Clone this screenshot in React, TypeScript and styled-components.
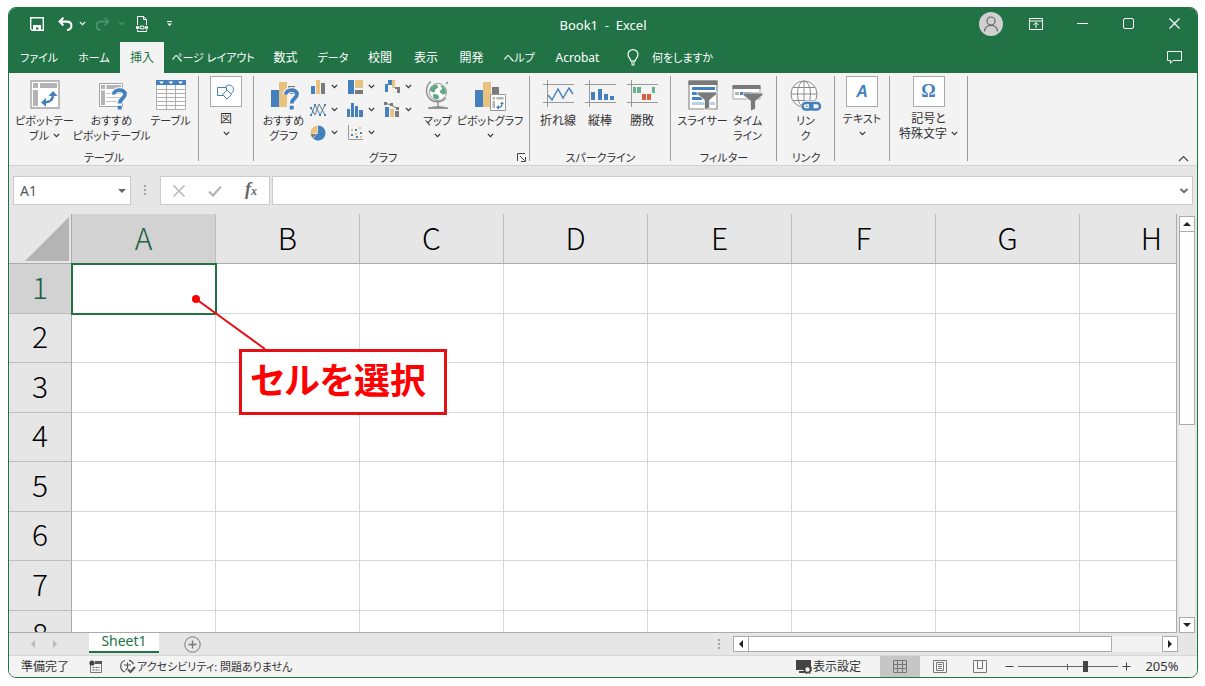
import React from "react";
import styled, { createGlobalStyle, css } from "styled-components";

const green = "#217346";
const blue = "#4480bd";
const sand = "#e9c27f";
const grey = "#7a7a7a";
const chrome = "#e6e6e6";
const panel = "#f3f3f3";

const Global = createGlobalStyle`
  * { box-sizing: border-box; }
  body {
    margin: 0;
    background: #fff;
    font-family: "Noto Sans", "Noto Sans CJK JP", sans-serif;
    font-size: 12px;
    line-height: 15px;
    color: #333;
    font-feature-settings: "palt";
  }
  button, input {
    font: inherit;
    font-feature-settings: inherit;
    color: inherit;
    border: 0;
    padding: 0;
    margin: 0;
    background: none;
  }
  svg { display: block; flex: none; }
`;

const Page = styled.div`
  padding: 7px 7px 8px 8px;
`;

const Window = styled.div`
  display: flex;
  flex-direction: column;
  height: calc(100vh - 15px);
  min-height: 400px;
  border: 1px solid ${green};
  border-radius: 8px;
  overflow: hidden;
  background: ${chrome};
`;

/* ---------- title bar ---------- */

const TitleBar = styled.header`
  display: grid;
  grid-template-columns: 1fr auto 1fr;
  height: 34px;
  flex: none;
  background: ${green};
  color: #fff;
`;

const QuickAccess = styled.div`
  display: flex;
  align-items: center;
  padding: 0 0 3px 12px;
`;

const QuickButton = styled.button<{ $w: number; $dim?: boolean }>`
  display: flex;
  align-items: center;
  justify-content: center;
  width: ${(p) => p.$w}px;
  height: 30px;
  color: ${(p) => (p.$dim ? "#4f9370" : "#fff")};
`;

const Title = styled.div`
  padding-top: 1px;
  font-size: 13px;
  line-height: 32px;
  white-space: pre;
`;

const WindowControls = styled.div`
  display: flex;
  justify-content: flex-end;
  align-items: center;
  padding-bottom: 3px;
`;

const Avatar = styled.button`
  width: 24px;
  height: 24px;
  margin-right: 10px;
  border-radius: 50%;
  background: #d0d0d0;
  color: #666;
`;

const ControlButton = styled.button`
  display: flex;
  align-items: center;
  justify-content: center;
  width: 46px;
  height: 30px;
`;

/* ---------- ribbon tabs ---------- */

const TabRow = styled.nav`
  display: flex;
  height: 31px;
  flex: none;
  padding-left: 1px;
  background: ${green};
  color: #fff;
`;

const RibbonTab = styled.button<{ $w: number; $active?: boolean; $kana?: boolean }>`
  width: ${(p) => p.$w}px;
  font-size: ${(p) => (p.$kana ? 11 : 12)}px;
  white-space: nowrap;
  display: flex;
  align-items: center;
  justify-content: center;
  ${(p) =>
    p.$active &&
    css`
      background: ${panel};
      color: ${green};
    `}
`;

const TellMe = styled.button`
  display: flex;
  align-items: center;
  gap: 13px;
  margin-left: 16px;
  font-size: 11px;
`;

const CommentButton = styled.button`
  margin-left: auto;
  padding-right: 14px;
`;

/* ---------- ribbon ---------- */

const Ribbon = styled.section`
  display: flex;
  height: 93px;
  flex: none;
  background: ${panel};
  border-bottom: 1px solid #d2d2d2;
`;

const Group = styled.div<{ $w: number }>`
  display: flex;
  flex-direction: column;
  flex: none;
  position: relative;
  width: ${(p) => p.$w}px;
  &::after {
    content: "";
    position: absolute;
    right: 0;
    top: 3px;
    bottom: 4px;
    width: 1px;
    background: #9a9a9a;
  }
`;

const GroupItems = styled.div`
  display: flex;
  justify-content: center;
  height: 77px;
  padding-right: 1px;
`;

const GroupLabel = styled.div<{ $launcher?: boolean }>`
  padding-right: ${(p) => (p.$launcher ? 18 : 0)}px;
  font-size: 11px;
  text-align: center;
  white-space: nowrap;
`;

const Launcher = styled.button`
  position: absolute;
  right: 4px;
  bottom: 3px;
`;

const Item = styled.button<{ $w: number; $boxed?: boolean }>`
  display: flex;
  flex-direction: column;
  align-items: center;
  flex: none;
  width: ${(p) => p.$w}px;
  padding-top: ${(p) => (p.$boxed ? 3 : 7)}px;
  white-space: nowrap;
`;

const ItemIcon = styled.span<{ $boxed?: boolean }>`
  display: flex;
  align-items: flex-start;
  justify-content: center;
  flex: none;
  height: 32px;
  margin-bottom: 1px;
  ${(p) =>
    p.$boxed &&
    css`
      align-items: center;
      width: 32px;
      height: 31px;
      margin-bottom: 4px;
      background: #fff;
      border: 1px solid #ababab;
    `}
`;

const Line = styled.span<{ $kana?: boolean }>`
  display: flex;
  align-items: center;
  justify-content: center;
  gap: 4px;
  height: 15px;
  font-size: ${(p) => (p.$kana ? 11 : 12)}px;
`;

const ChartGrid = styled.div`
  display: grid;
  grid-template-columns: repeat(3, 37px);
  grid-template-rows: repeat(3, 23px);
  padding-top: 2px;
`;

const ChartButton = styled.button`
  display: flex;
  align-items: center;
  gap: 4px;
`;

const Collapse = styled.button`
  margin: auto 8px 3px auto;
`;

/* ---------- formula bar ---------- */

const FormulaBar = styled.div`
  display: flex;
  flex: none;
  height: 48px;
  padding: 10px 4px 9px;
`;

const Field = styled.div<{ $w?: number }>`
  display: flex;
  align-items: center;
  ${(p) => (p.$w ? `width: ${p.$w}px;` : "flex: 1;")}
  background: #fff;
  border: 1px solid #cacaca;
`;

const FieldInput = styled.input`
  flex: 1;
  min-width: 0;
  padding-left: 6px;
  font-size: 14px;
  color: #555;
  outline: none;
`;

const FieldButton = styled.button`
  display: flex;
  align-items: center;
  justify-content: center;
  flex: 1;
  height: 100%;
`;

const DropButton = styled.button`
  padding: 0 4px;
`;

const Grip = styled.div<{ $w: number }>`
  display: flex;
  align-items: center;
  justify-content: center;
  width: ${(p) => p.$w}px;
`;

const Spacer = styled.div`
  width: 2px;
`;

/* ---------- sheet ---------- */

const Body = styled.div`
  display: flex;
  flex: 1;
  min-height: 0;
`;

const Sheet = styled.main`
  position: relative;
  flex: 1;
  min-width: 0;
  overflow: hidden;
  border-right: 1px solid #ababab;
  border-bottom: 1px solid #ababab;
`;

const Grid = styled.table`
  width: 1215px;
  table-layout: fixed;
  border-collapse: separate;
  border-spacing: 0;
  font-family: "Noto Sans CJK JP", sans-serif;
  font-size: 30px;
  line-height: 40px;
  color: #000;
`;

const Corner = styled.th`
  width: 63px;
  height: 50px;
  padding: 0 2px 2px 0;
  vertical-align: bottom;
  border-right: 1px solid #ababab;
  border-bottom: 1px solid #ababab;
  svg { margin-left: auto; }
`;

const ColHead = styled.th<{ $on?: boolean }>`
  width: 144px;
  padding: 0 0 4px;
  font-weight: 300;
  background: ${(p) => (p.$on ? "#d2d2d2" : chrome)};
  color: ${(p) => (p.$on ? "#1f6040" : "#000")};
  border-right: 1px solid #bdbdbd;
  border-bottom: 1px solid ${(p) => (p.$on ? green : "#ababab")};
`;

const Row = styled.tr`
  height: 50px;
  &:nth-child(even) { height: 49px; }
`;

const RowHead = styled.th<{ $on?: boolean }>`
  padding: 0 0 6px;
  font-weight: 300;
  background: ${(p) => (p.$on ? "#d2d2d2" : chrome)};
  color: ${(p) => (p.$on ? "#1f6040" : "#000")};
  border-right: 1px solid #ababab;
  border-bottom: 1px solid #bdbdbd;
`;

const Cell = styled.td<{ $on?: boolean }>`
  padding: 0;
  background: #fff;
  border-right: 1px solid #d6d6d6;
  border-bottom: 1px solid #d6d6d6;
  ${(p) =>
    p.$on &&
    css`
      position: relative;
      outline: 2px solid ${green};
      outline-offset: -1px;
    `}
`;

const Callout = styled.div`
  position: absolute;
  left: 230px;
  top: 135px;
  padding: 6px 18px 14px 8px;
  background: #fff;
  border: 3px solid #e60f14;
  color: #fe0000;
  font-family: "Noto Sans CJK JP", sans-serif;
  font-size: 36px;
  line-height: 40px;
  font-weight: 700;
  white-space: nowrap;
`;

const Leader = styled.svg`
  position: absolute;
  left: 182px;
  top: 80px;
`;

const VScroll = styled.div`
  display: flex;
  flex-direction: column;
  width: 20px;
  padding: 2px 2px 0;
`;

const ScrollButton = styled.button`
  display: flex;
  align-items: center;
  justify-content: center;
  flex: none;
  width: 16px;
  height: 16px;
  background: #fff;
  border: 1px solid #ababab;
`;

const Track = styled.div`
  display: flex;
  flex: 1;
  background: #f2f2f2;
`;

const VThumb = styled.div`
  width: 16px;
  height: 50%;
  background: #fff;
  border: 1px solid #ababab;
  border-top: 0;
`;

/* ---------- sheet tabs ---------- */

const SheetBar = styled.div`
  display: flex;
  flex: none;
  height: 22px;
`;

const NavArrows = styled.div`
  display: flex;
  align-items: center;
  justify-content: center;
  gap: 14px;
  width: 80px;
  padding-right: 10px;
`;

const SheetTab = styled.button`
  width: 70px;
  height: 21px;
  margin-top: -1px;
  padding-bottom: 2px;
  font-size: 14px;
  background: #fff;
  color: ${green};
  border-bottom: 2px solid ${green};
`;

const AddSheet = styled.button`
  margin-left: 25px;
`;

const HScroll = styled.div`
  display: flex;
  flex: 0 1 445px;
  height: 16px;
  margin: 3px 19px 0 0;
`;

const HThumb = styled.div`
  width: 88%;
  background: #fff;
  border: 1px solid #ababab;
  border-left: 0;
`;

/* ---------- status bar ---------- */

const StatusBar = styled.footer`
  display: flex;
  align-items: center;
  flex: none;
  height: 22px;
  padding: 0 18px 0 12px;
  background: ${panel};
  border-top: 1px solid #d6d6d6;
`;

const StatusButton = styled.button<{ $gap?: number; $kana?: boolean }>`
  display: flex;
  align-items: center;
  gap: 1px;
  margin-left: ${(p) => p.$gap ?? 0}px;
  font-size: ${(p) => (p.$kana ? 11 : 12)}px;
  white-space: nowrap;
`;

const ViewButtons = styled.div`
  display: flex;
  margin-left: 19px;
`;

const ViewButton = styled.button<{ $on?: boolean }>`
  display: flex;
  align-items: center;
  justify-content: center;
  width: 40px;
  height: 21px;
  background: ${(p) => (p.$on ? "#c6c6c6" : "transparent")};
`;

const Push = styled.div`
  flex: 1;
`;

const ZoomBox = styled.div`
  display: flex;
  align-items: center;
  gap: 4px;
  margin-left: 5px;
`;

const ZoomTrack = styled.div`
  position: relative;
  width: 100px;
  height: 16px;
  &::before {
    content: "";
    position: absolute;
    left: 49px;
    top: 5px;
    width: 1px;
    height: 6px;
    background: #555;
  }
`;

const ZoomRange = styled.input`
  appearance: none;
  display: block;
  position: relative;
  width: 100px;
  height: 16px;
  &::-webkit-slider-runnable-track {
    height: 11px;
    background: linear-gradient(#666, #666) center / 100% 1px no-repeat;
  }
  &::-webkit-slider-thumb {
    appearance: none;
    width: 5px;
    height: 11px;
    background: #444;
  }
`;

const ZoomValue = styled.button`
  margin-left: 10px;
  width: 34px;
  font-size: 13px;
`;

/* ---------- icons ---------- */

const Chevron = ({ color = "#333" }: { color?: string }) => (
  <svg width="7" height="5" viewBox="0 0 7 5" fill="none" stroke={color} strokeWidth="1.2">
    <path d="M0.8 0.8 3.5 3.6 6.2 0.8" />
  </svg>
);

const Triangle = ({ dir, color = "#222", size = 8 }: { dir: "up" | "down" | "left" | "right"; color?: string; size?: number }) => {
  const d = { up: "M0 6 4 2 8 6Z", down: "M0 2 4 6 8 2Z", left: "M6 0 2 4 6 8Z", right: "M2 0 6 4 2 8Z" }[dir];
  return (
    <svg width={size} height={size} viewBox="0 0 8 8">
      <path d={d} fill={color} />
    </svg>
  );
};

const Dots = () => (
  <svg width="3" height="11" viewBox="0 0 3 11" fill="#a6a6a6">
    <path d="M0 0h2v2H0zM0 4h2v2H0zM0 8h2v2H0z" />
  </svg>
);

const SaveIcon = () => (
  <svg width="14" height="14" viewBox="0 0 14 14">
    <path d="M0.7 0.7h12.6v12.6H2.2L0.7 12Z" fill="none" stroke="currentColor" strokeWidth="1.4" />
    <path d="M3 8h8v5H8.400v-2.600H6V13H3Z" fill="currentColor" />
  </svg>
);

const UndoIcon = ({ flip }: { flip?: boolean }) => (
  <svg width="15" height="14" viewBox="0 0 15 14" fill="none" stroke="currentColor" strokeWidth={flip ? 1.6 : 2.1}>
    <g transform={flip ? "matrix(-1 0 0 1 15 0)" : undefined}>
      <path d="M5.4 0.8 1.6 4.6 5.4 8.4M2 4.6h6.6c3 0 4.8 1.6 4.8 4.2 0 2.4-1.8 4.2-4.4 4.2" />
    </g>
  </svg>
);

const DocIcon = () => (
  <svg width="12" height="16" viewBox="0 0 12 16" fill="none" stroke="#fff">
    <path d="M1.500 9V0.500h6l3 3V9M7.500 0.500v3h3M1.500 13.500v2h9v-2" />
    <path d="M0 11.500h3M9 11.500h3" strokeWidth="2.400" />
    <path d="M4 10.200h4v2.600H4z" />
  </svg>
);

const PersonIcon = () => (
  <svg width="24" height="24" viewBox="0 0 24 24" fill="none" stroke="#666" strokeWidth="1.2">
    <circle cx="12" cy="9" r="4" />
    <path d="M5.5 19.5c0-4 3-6.2 6.5-6.2s6.5 2.200 6.500 6.200" />
  </svg>
);

const BulbIcon = () => (
  <svg width="12" height="17" viewBox="0 0 12 17" fill="none" stroke="#fff" strokeWidth="1.2">
    <path d="M4 12.200C4 9.800 1 8.600 1 5.400A5 4.800 0 0 1 11 5.400C11 8.600 8 9.800 8 12.200ZM4 14h4M4.500 15.800h3" />
  </svg>
);

const PivotIcon = () => (
  <svg width="30" height="29" viewBox="0 0 30 29">
    <path d="M1 1h28v27H1z" fill="#fff" stroke="#a3a3a3" strokeWidth="1.400" />
    <path d="M3 3h5v5H3zM10 3h17v5H10zM3 10h5v16H3z" fill="#b3b3b3" />
    <path d="M14 22.500c6 0 9-3 9-8" fill="none" stroke={blue} strokeWidth="2.400" />
    <path d="m16 18-5 4.500 5 4.200ZM18.500 16l4.500-5 4.500 5Z" fill={blue} />
  </svg>
);

const QuestionMark = ({ x, y }: { x: number; y: number }) => (
  <g transform={`translate(${x} ${y})`}>
    <path d="M1.800 6.500C1.800 0.800 13 0.500 13 6.200c0 4-5.300 4.200-5.300 9.300" fill="none" stroke={panel} strokeWidth="6" />
    <path d="M1.800 6.500C1.800 0.800 13 0.500 13 6.200c0 4-5.300 4.200-5.300 9.300" fill="none" stroke={blue} strokeWidth="3.800" />
    <path d="M5.700 17.800h4v3.800h-4z" fill={blue} />
  </g>
);

const SuggestPivotIcon = () => (
  <svg width="32" height="32" viewBox="0 0 32 32">
    <path d="M3.500 3.500h23v23h-23z" fill="#fff" stroke="#a3a3a3" />
    <path d="M5 5h4v4H5zM10.500 5H25v4H10.500zM5 10.500h4V25H5z" fill="#b3b3b3" />
    <path d="M10 13.500h15M10 17.500h15M10 21.500h15" stroke="#c4c4c4" />
    <QuestionMark x={16} y={8} />
  </svg>
);

const TableIcon = () => (
  <svg width="30" height="30" viewBox="0 0 30 30">
    <path d="M0.500 0.500h29v29H0.500z" fill="#fff" stroke="#b0b0b0" />
    <path d="M0 9.500h30M0 13.500h30M0 17.500h30M0 21.500h30M0 25.500h30M10.500 0v30M19.500 0v30" stroke="#b0b0b0" />
    <path d="M0 0h30v5H0z" fill={blue} />
    <path d="M3 1.500h5l-2.500 2.500ZM12.500 1.500h5L15 4ZM22 1.500h5L24.500 4Z" fill="#fff" />
  </svg>
);

const ShapesIcon = () => (
  <svg width="18" height="16" viewBox="0 0 18 16" fill="#fff" stroke={blue}>
    <circle cx="12" cy="5.500" r="4.500" />
    <path d="M0.500 3.500h9v8h-9z" />
    <path d="m10 6 4.500 4.500-4.500 4.500-4.500-4.500Z" />
  </svg>
);

const SuggestChartIcon = () => (
  <svg width="32" height="32" viewBox="0 0 32 32">
    <path d="M3 10h8v17H3z" fill={blue} />
    <path d="M11 2h8v25h-8z" fill={sand} />
    <path d="M20 6h7v8h-7z" fill={grey} />
    <QuestionMark x={16} y={8} />
  </svg>
);

const chartIcons: Record<string, React.ReactNode> = {
  縦棒: (
    <>
      <path d="M1 7h4v8H1z" fill={blue} />
      <path d="M6 1h4v14H6z" fill={sand} />
      <path d="M11 4h4v11h-4z" fill={grey} />
    </>
  ),
  階層: (
    <>
      <path d="M1 1h6v14H1z" fill={blue} />
      <path d="M8 1h8v8H8z" fill={sand} />
      <path d="M8 11h8v4H8z" fill={grey} />
    </>
  ),
  滝: (
    <>
      <path d="M1 5h3v8H1zM4 1h4v5H4z" fill={blue} />
      <path d="M8 1h3v8H8z" fill={sand} />
      <path d="M11 8h5v6h-3V10h-2z" fill={grey} />
    </>
  ),
  折れ線: (
    <>
      <path d="M1 14 5 3l5 10 5-10" fill="none" stroke={blue} />
      <path d="m1 6 4 7 4-11 6 11" fill="none" stroke={grey} />
      <path d="M0 12h2v2H0zM4 2h2v2H4zM9 12h2v2H9zM14 2h2v2h-2zM0 5h2v2H0zM14 12h2v2h-2z" fill={blue} />
    </>
  ),
  統計: <path d="M0 7h3v8H0zM4 1h3v14H4zM8 4h3v11H8zM12 8h4v7h-4z" fill={blue} />,
  複合: (
    <>
      <path d="M1 5h4v10H1z" fill={blue} />
      <path d="M6 7h4v8H6z" fill={sand} />
      <path d="M11 9h4v6h-4z" fill={grey} />
      <path d="m1 1 6 2 7 4" fill="none" stroke={grey} />
      <path d="M0 0h3v3H0zM6 1h3v3H6zM12 5h3v3h-3z" fill={grey} />
    </>
  ),
  円: (
    <>
      <path d="M8 8V0.500A7.500 7.500 0 1 1 3 13.600Z" fill={blue} />
      <path d="M7.500 8V0.500A7.500 7.500 0 0 0 0.500 9Z" fill={sand} />
      <path d="M7 9H0.700A7 7 0 0 0 2.500 13Z" fill={grey} />
    </>
  ),
  散布図: (
    <>
      <path d="M1.500 0v14.500H16" fill="none" stroke="#999" />
      <path d="M4 9h2v2H4zM8 4h2v2H8zM13 7h2v2h-2zM9 11h2v2H9z" fill={blue} />
      <path d="M4 4h2v2H4zM12 2h2v2h-2zM8 8h2v2H8zM13 11h2v2h-2z" fill={sand} />
    </>
  ),
};

const MapIcon = () => (
  <svg width="26" height="30" viewBox="0 0 26 30">
    <circle cx="13" cy="12" r="8.500" fill="#fff" stroke="#9a9a9a" />
    <path d="M8 6c3-3 5-1 5 1s-3 1-3 4-4 1-5-1c0-2 1-3 3-4ZM15 6c3-2 6 3 6 6 0 2-2 3-4 2s-3-3-1-4 1-3-1-4ZM9 14c3 0 5 1 5 3s-2 3-4 2-3-4-1-5Z" fill="#5fa886" />
    <path d="M6 1.500C1 5 0 13 4 18c4 5 12 5 17 0M13 22v5M21 4l2-2" fill="none" stroke="#8a8a8a" strokeWidth="1.400" />
    <path d="M3 28.300c5-2 15-2 20 0Z" fill="#8a8a8a" stroke="#8a8a8a" />
  </svg>
);

const PivotChartIcon = () => (
  <svg width="32" height="32" viewBox="0 0 32 32">
    <path d="M1 10h8v17H1z" fill={blue} />
    <path d="M9 2h8v25H9z" fill={sand} />
    <path d="M18 7h7v10h-7z" fill={grey} />
    <path d="M16.500 14.500h15v16h-15z" fill="#fff" stroke="#999" />
    <path d="M18.500 17h2.500v2.500h-2.500zM22.500 17h7v2.500h-7zM18.500 21h2.500v7h-2.500z" fill="#b3b3b3" />
    <path d="M24 27.500c2.500 0 4-1.500 4-4" fill="none" stroke={blue} strokeWidth="1.300" />
    <path d="m25 25-3 2.500 3 2ZM26 24l2-2.500 2 2.500Z" fill={blue} />
  </svg>
);

const Axes = () => <path d="M0 4.500h31M0 22.500h31M4.500 0v27" stroke="#999" />;

const SparkLineIcon = () => (
  <svg width="31" height="28" viewBox="0 0 31 28" fill="none">
    <Axes />
    <path d="m5 15 4 5 6-11 5 9 6-10 4 6" stroke={blue} strokeWidth="1.400" />
  </svg>
);

const SparkBarIcon = () => (
  <svg width="31" height="28" viewBox="0 0 31 28">
    <Axes />
    <path d="M6 12h4v8H6zM13 9h4v11h-4zM19 14h4v6h-4zM25 16h4v4h-4z" fill={blue} />
  </svg>
);

const WinLossIcon = () => (
  <svg width="31" height="28" viewBox="0 0 31 28">
    <Axes />
    <path d="M6 7h3v6H6zM10 7h4v6h-4zM25 7h3v6h-3z" fill="#6aae8e" />
    <path d="M15 14h4v6h-4zM20 14h4v6h-4z" fill="#d8603a" />
  </svg>
);

const Funnel = ({ x, y }: { x: number; y: number }) => (
  <path transform={`translate(${x} ${y})`} d="M0 0h20v2l-7.500 6v8l-5 2V8L0 2Z" fill={grey} stroke={panel} strokeWidth="0.800" />
);

const SlicerIcon = () => (
  <svg width="30" height="30" viewBox="0 0 30 30">
    <path d="M1 1h28v28H1z" fill="#fff" stroke="#8a8a8a" strokeWidth="1.200" />
    <path d="M0.500 0.500h29V5H0.500z" fill={grey} />
    <path d="M4 7h23v3H4zM4 12h23v3H4zM4 17h10v3H4z" fill={blue} />
    <path d="M4 22h23v3H4z" fill="#b7cfe6" />
    <Funnel x={9} y={12} />
  </svg>
);

const TimelineIcon = () => (
  <svg width="31" height="32" viewBox="0 0 31 32">
    <path d="M1 6h27v13H1z" fill="#fff" stroke="#a3a3a3" />
    <path d="M0.500 5h28v4H0.500z" fill={grey} />
    <path d="M3 12h4v3H3zM19 12h8v3h-8z" fill="#b3b3b3" />
    <path d="M8 12h11v3H8z" fill={blue} />
    <Funnel x={11} y={13} />
  </svg>
);

const LinkIcon = () => (
  <svg width="32" height="32" viewBox="0 0 32 32" fill="none">
    <g stroke="#8a8a8a">
      <circle cx="14" cy="14" r="13" fill="#fff" />
      <ellipse cx="14" cy="14" rx="6.500" ry="13" />
      <path d="M14 1v26M1 14h26M3 7.500h22M3 20.500h22" />
    </g>
    <g stroke={panel} strokeWidth="5">
      <rect x="13" y="23" width="10" height="6.500" rx="3.200" />
      <rect x="20" y="23" width="10" height="6.500" rx="3.200" />
    </g>
    <g stroke={blue} strokeWidth="2.400">
      <rect x="12.500" y="23" width="10" height="6.500" rx="3.200" />
      <rect x="20" y="23" width="10" height="6.500" rx="3.200" />
    </g>
  </svg>
);

const Glyph = styled.span<{ $italic?: boolean }>`
  font-family: ${(p) => (p.$italic ? '"Liberation Sans"' : '"Liberation Serif"')}, serif;
  font-style: ${(p) => (p.$italic ? "italic" : "normal")};
  font-size: ${(p) => (p.$italic ? 16 : 18)}px;
  font-weight: 700;
  color: ${blue};
`;

const FxGlyph = styled.span`
  font-family: "Liberation Serif", serif;
  font-style: italic;
  font-weight: 700;
  font-size: 18px;
  color: #666;
  small { font-size: 12px; }
`;

/* ---------- data ---------- */

const tabs: [string, number][] = [
  ["ファイル", 58],
  ["ホーム", 52],
  ["挿入", 44],
  ["ページ レイアウト", 98],
  ["数式", 47],
  ["データ", 48],
  ["校閲", 46],
  ["表示", 46],
  ["開発", 45],
  ["ヘルプ", 50],
  ["Acrobat", 67],
];

const columns = ["A", "B", "C", "D", "E", "F", "G", "H"];
const rows = [1, 2, 3, 4, 5, 6, 7, 8];

const isKana = (text: string) => /^[\u3040-\u30ff ]+$/.test(text);

type RibbonItemProps = { w: number; icon: React.ReactNode; lines: string[]; drop?: "inline" | "below"; boxed?: boolean };

const RibbonItem = ({ w, icon, lines, drop, boxed }: RibbonItemProps) => (
  <Item $w={w} $boxed={boxed}>
    <ItemIcon $boxed={boxed}>{icon}</ItemIcon>
    {lines.map((text, i) => (
      <Line key={text} $kana={isKana(text)}>
        {text}
        {drop === "inline" && i === lines.length - 1 && <Chevron />}
      </Line>
    ))}
    {drop === "below" && (
      <Line>
        <Chevron />
      </Line>
    )}
  </Item>
);

export default function App() {
  return (
    <Page>
      <Global />
      <Window>
        <TitleBar>
          <QuickAccess>
            <QuickButton $w={32} aria-label="上書き保存"><SaveIcon /></QuickButton>
            <QuickButton $w={24} aria-label="元に戻す"><UndoIcon /></QuickButton>
            <QuickButton $w={10} aria-label="元に戻す一覧"><Chevron color="#fff" /></QuickButton>
            <QuickButton $w={30} $dim aria-label="やり直し"><UndoIcon flip /></QuickButton>
            <QuickButton $w={8} $dim aria-label="やり直し一覧"><Chevron color="#4f9370" /></QuickButton>
            <QuickButton $w={34} aria-label="印刷プレビュー"><DocIcon /></QuickButton>
            <QuickButton $w={20} aria-label="カスタマイズ">
              <svg width="7" height="7" viewBox="0 0 7 7" fill="#fff"><path d="M1 1h5v1H1zM1 3.500h5L3.500 6Z" /></svg>
            </QuickButton>
          </QuickAccess>
          <Title>{"Book1  -  Excel"}</Title>
          <WindowControls>
            <Avatar aria-label="アカウント"><PersonIcon /></Avatar>
            <ControlButton aria-label="リボンの表示オプション">
              <svg width="14" height="12" viewBox="0 0 14 12" fill="none" stroke="#fff">
                <path d="M0.500 0.500h13v11H0.500zM0.500 3h13M7 10V4.500M4.500 7 7 4.500 9.500 7" />
              </svg>
            </ControlButton>
            <ControlButton aria-label="最小化">
              <svg width="11" height="11" viewBox="0 0 11 11" stroke="#fff"><path d="M0 5.500h11" /></svg>
            </ControlButton>
            <ControlButton aria-label="最大化">
              <svg width="11" height="11" viewBox="0 0 11 11" fill="none" stroke="#fff"><rect x="0.500" y="0.500" width="10" height="10" rx="1.500" /></svg>
            </ControlButton>
            <ControlButton aria-label="閉じる">
              <svg width="11" height="11" viewBox="0 0 11 11" stroke="#fff" strokeWidth="1.200"><path d="m0.500 0.500 10 10M10.500 0.500l-10 10" /></svg>
            </ControlButton>
          </WindowControls>
        </TitleBar>

        <TabRow>
          {tabs.map(([name, w]) => (
            <RibbonTab key={name} $w={w} $active={name === "挿入"} $kana={isKana(name)}>{name}</RibbonTab>
          ))}
          <TellMe><BulbIcon />何をしますか</TellMe>
          <CommentButton aria-label="コメント">
            <svg width="16" height="13" viewBox="0 0 16 13" fill="none" stroke="#fff"><path d="M0.500 0.500h14v9H6l-2.500 2.800V9.500h-3Z" /></svg>
          </CommentButton>
        </TabRow>

        <Ribbon>
          <Group $w={190}>
            <GroupItems>
              <RibbonItem w={70} icon={<PivotIcon />} lines={["ピボットテー", "ブル"]} drop="inline" />
              <RibbonItem w={64} icon={<SuggestPivotIcon />} lines={["おすすめ", "ピボットテーブル"]} />
              <RibbonItem w={54} icon={<TableIcon />} lines={["テーブル"]} />
            </GroupItems>
            <GroupLabel>テーブル</GroupLabel>
          </Group>
          <Group $w={55}>
            <GroupItems>
              <RibbonItem w={54} boxed icon={<ShapesIcon />} lines={["図"]} drop="below" />
            </GroupItems>
          </Group>
          <Group $w={276}>
            <GroupItems>
              <RibbonItem w={52} icon={<SuggestChartIcon />} lines={["おすすめ", "グラフ"]} />
              <ChartGrid>
                {Object.entries(chartIcons).map(([name, icon]) => (
                  <ChartButton key={name} aria-label={name}>
                    <svg width="17" height="16" viewBox="0 0 17 16">{icon}</svg>
                    <Chevron />
                  </ChartButton>
                ))}
              </ChartGrid>
              <RibbonItem w={34} icon={<MapIcon />} lines={["マップ"]} drop="below" />
              <RibbonItem w={71} icon={<PivotChartIcon />} lines={["ピボットグラフ"]} drop="below" />
            </GroupItems>
            <GroupLabel $launcher>グラフ</GroupLabel>
            <Launcher aria-label="グラフの詳細">
              <svg width="9" height="9" viewBox="0 0 9 9" fill="none" stroke="#444"><path d="M0.500 8V0.500H8M3 3l4.500 4.500M8.500 4v4.500H4" /></svg>
            </Launcher>
          </Group>
          <Group $w={141}>
            <GroupItems>
              <RibbonItem w={42} icon={<SparkLineIcon />} lines={["折れ線"]} />
              <RibbonItem w={42} icon={<SparkBarIcon />} lines={["縦棒"]} />
              <RibbonItem w={42} icon={<WinLossIcon />} lines={["勝敗"]} />
            </GroupItems>
            <GroupLabel>スパークライン</GroupLabel>
          </Group>
          <Group $w={106}>
            <GroupItems>
              <RibbonItem w={48} icon={<SlicerIcon />} lines={["スライサー"]} />
              <RibbonItem w={42} icon={<TimelineIcon />} lines={["タイム", "ライン"]} />
            </GroupItems>
            <GroupLabel>フィルター</GroupLabel>
          </Group>
          <Group $w={58}>
            <GroupItems>
              <RibbonItem w={50} icon={<LinkIcon />} lines={["リン", "ク"]} />
            </GroupItems>
            <GroupLabel>リンク</GroupLabel>
          </Group>
          <Group $w={55}>
            <GroupItems>
              <RibbonItem w={54} boxed icon={<Glyph $italic>A</Glyph>} lines={["テキスト"]} drop="below" />
            </GroupItems>
          </Group>
          <Group $w={78}>
            <GroupItems>
              <RibbonItem w={70} boxed icon={<Glyph>Ω</Glyph>} lines={["記号と", "特殊文字"]} drop="inline" />
            </GroupItems>
          </Group>
          <Collapse aria-label="リボンを折りたたむ">
            <svg width="11" height="7" viewBox="0 0 11 7" fill="none" stroke="#444" strokeWidth="1.200"><path d="m1 6 4.500-4.500L10 6" /></svg>
          </Collapse>
        </Ribbon>

        <FormulaBar>
          <Field $w={118}>
            <FieldInput aria-label="名前ボックス" defaultValue="A1" />
            <DropButton aria-label="名前一覧"><Triangle dir="down" color="#666" size={8} /></DropButton>
          </Field>
          <Grip $w={29}><Dots /></Grip>
          <Field $w={110}>
            <FieldButton aria-label="キャンセル">
              <svg width="12" height="12" viewBox="0 0 12 12" stroke="#b5b5b5" strokeWidth="1.500"><path d="m0.500 0.500 11 11M11.500 0.500l-11 11" /></svg>
            </FieldButton>
            <FieldButton aria-label="入力">
              <svg width="14" height="12" viewBox="0 0 14 12" fill="none" stroke="#b5b5b5" strokeWidth="2.200"><path d="m1 6.500 4 4L13 1.500" /></svg>
            </FieldButton>
            <FieldButton aria-label="関数の挿入"><FxGlyph>f<small>x</small></FxGlyph></FieldButton>
          </Field>
          <Spacer />
          <Field>
            <FieldInput aria-label="数式バー" />
            <DropButton aria-label="数式バーの展開">
              <svg width="8" height="6" viewBox="0 0 8 6" fill="none" stroke="#666" strokeWidth="1.800"><path d="m0.500 1 3.500 3.200L7.500 1" /></svg>
            </DropButton>
          </Field>
        </FormulaBar>

        <Body>
          <Sheet>
            <Grid>
              <thead>
                <tr>
                  <Corner aria-label="すべて選択">
                    <svg width="44" height="44" viewBox="0 0 44 44"><path d="M44 0v44H0Z" fill="#b4b4b4" /></svg>
                  </Corner>
                  {columns.map((c) => (
                    <ColHead key={c} scope="col" $on={c === "A"}>{c}</ColHead>
                  ))}
                </tr>
              </thead>
              <tbody>
                {rows.map((r) => (
                  <Row key={r}>
                    <RowHead scope="row" $on={r === 1}>{r}</RowHead>
                    {columns.map((c) => (
                      <Cell key={c} $on={r === 1 && c === "A"} />
                    ))}
                  </Row>
                ))}
              </tbody>
            </Grid>
            <Leader width="76" height="58" viewBox="0 0 76 58">
              <path d="M5 5 74 55" stroke="#e60f14" strokeWidth="2" />
              <circle cx="5" cy="5" r="4" fill="#fe0000" />
            </Leader>
            <Callout>セルを選択</Callout>
          </Sheet>
          <VScroll>
            <ScrollButton aria-label="上へスクロール"><Triangle dir="up" /></ScrollButton>
            <Track><VThumb /></Track>
            <ScrollButton aria-label="下へスクロール"><Triangle dir="down" /></ScrollButton>
          </VScroll>
        </Body>

        <SheetBar>
          <NavArrows>
            <Triangle dir="left" color="#b8b8b8" />
            <Triangle dir="right" color="#b8b8b8" />
          </NavArrows>
          <SheetTab>Sheet1</SheetTab>
          <AddSheet aria-label="新しいシート">
            <svg width="17" height="17" viewBox="0 0 17 17" fill="none" stroke="#777"><circle cx="8.500" cy="8.500" r="7.700" /><path d="M8.500 4.500v8M4.500 8.500h8" strokeWidth="1.400" /></svg>
          </AddSheet>
          <Push />
          <Grip $w={27}><Dots /></Grip>
          <HScroll>
            <ScrollButton aria-label="左へスクロール"><Triangle dir="left" /></ScrollButton>
            <Track><HThumb /></Track>
            <ScrollButton aria-label="右へスクロール"><Triangle dir="right" /></ScrollButton>
          </HScroll>
        </SheetBar>

        <StatusBar>
          <span>準備完了</span>
          <StatusButton $gap={20} aria-label="マクロの記録">
            <svg width="13" height="13" viewBox="0 0 13 13">
              <path d="M1.500 4v8.500h11V1.500H6" fill="none" stroke="#777" />
              <path d="M6 1h7v3H6z" fill="#555" />
              <circle cx="3" cy="3" r="2.600" fill="#444" />
              <path d="M3.500 7.500h7M3.500 10h7" stroke="#555" strokeDasharray="2 1" />
            </svg>
          </StatusButton>
          <StatusButton $gap={18} $kana>
            <svg width="16" height="15" viewBox="0 0 16 15" fill="none" stroke="#555" strokeWidth="1.200">
              <path d="M5 1.500A6 6 0 0 0 5 13M9 1.300a6 6 0 0 1 4.500 4M4 6h7M7.500 3.500V9L5.500 11.500" />
              <path d="m8 10.500 2.500 2.500 4.500-5" strokeWidth="2" />
            </svg>
            アクセシビリティ: 問題ありません
          </StatusButton>
          <Push />
          <StatusButton>
            <svg width="16" height="14" viewBox="0 0 16 14">
              <path d="M0 0h15v10H0zM3 11h6v2H3z" fill="#444" />
              <circle cx="11.500" cy="9.500" r="3" fill={panel} stroke="#444" strokeWidth="1.600" />
              <circle cx="11.500" cy="9.500" r="4.300" fill="none" stroke="#444" strokeWidth="1.200" strokeDasharray="1.700 1.700" />
            </svg>
            表示設定
          </StatusButton>
          <ViewButtons>
            <ViewButton $on aria-label="標準">
              <svg width="14" height="13" viewBox="0 0 14 13" fill="none" stroke="#777"><path d="M0.500 0.500h13v12H0.500zM4.500 0v13M9.500 0v13M0 4.500h14M0 8.500h14" /></svg>
            </ViewButton>
            <ViewButton aria-label="ページ レイアウト">
              <svg width="14" height="13" viewBox="0 0 14 13" fill="none" stroke="#777"><path d="M0.500 0.500h13v12H0.500zM3.500 2.500h7v8h-7zM5 4.500h4M5 6.500h4M5 8.500h4" /></svg>
            </ViewButton>
            <ViewButton aria-label="改ページ プレビュー">
              <svg width="14" height="13" viewBox="0 0 14 13" fill="none" stroke="#777"><path d="M0.500 0.500h13v12H0.500zM4.500 0.500v8h5v-8M9.500 8.500h-5" /></svg>
            </ViewButton>
          </ViewButtons>
          <ZoomBox>
            <button aria-label="縮小"><svg width="9" height="9" viewBox="0 0 9 9" stroke="#444"><path d="M0.500 4.500h8" /></svg></button>
            <ZoomTrack>
              <ZoomRange type="range" min={0} max={100} defaultValue={68} aria-label="ズーム" />
            </ZoomTrack>
            <button aria-label="拡大"><svg width="9" height="9" viewBox="0 0 9 9" stroke="#444"><path d="M0.500 4.500h8M4.500 0.500v8" /></svg></button>
            <ZoomValue>205%</ZoomValue>
          </ZoomBox>
        </StatusBar>
      </Window>
    </Page>
  );
}
